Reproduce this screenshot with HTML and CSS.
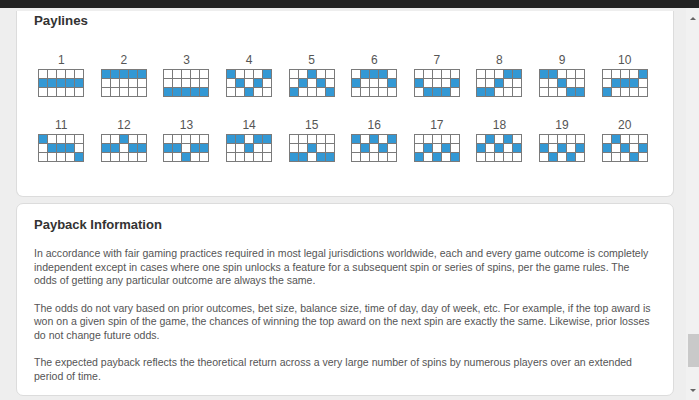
FILE: index.html
```html
<!DOCTYPE html>
<html>
<head>
<meta charset="utf-8">
<link rel="stylesheet" href="styles.css">
</head>
<body>
<div class="topbar"></div>
<div class="viewport">
  <main class="main">
    <section class="card card-paylines">
      <h2 class="card-title">Paylines</h2>
      <div class="paylines">
        <div class="pl"><span class="num">1</span><div class="grid"><i></i><i></i><i></i><i></i><i></i><b></b><b></b><b></b><b></b><b></b><i></i><i></i><i></i><i></i><i></i></div></div>
        <div class="pl"><span class="num">2</span><div class="grid"><b></b><b></b><b></b><b></b><b></b><i></i><i></i><i></i><i></i><i></i><i></i><i></i><i></i><i></i><i></i></div></div>
        <div class="pl"><span class="num">3</span><div class="grid"><i></i><i></i><i></i><i></i><i></i><i></i><i></i><i></i><i></i><i></i><b></b><b></b><b></b><b></b><b></b></div></div>
        <div class="pl"><span class="num">4</span><div class="grid"><b></b><i></i><i></i><i></i><b></b><i></i><b></b><i></i><b></b><i></i><i></i><i></i><b></b><i></i><i></i></div></div>
        <div class="pl"><span class="num">5</span><div class="grid"><i></i><i></i><b></b><i></i><i></i><i></i><b></b><i></i><b></b><i></i><b></b><i></i><i></i><i></i><b></b></div></div>
        <div class="pl"><span class="num">6</span><div class="grid"><i></i><b></b><b></b><b></b><i></i><b></b><i></i><i></i><i></i><b></b><i></i><i></i><i></i><i></i><i></i></div></div>
        <div class="pl"><span class="num">7</span><div class="grid"><i></i><i></i><i></i><i></i><i></i><b></b><i></i><i></i><i></i><b></b><i></i><b></b><b></b><b></b><i></i></div></div>
        <div class="pl"><span class="num">8</span><div class="grid"><i></i><i></i><i></i><b></b><b></b><i></i><i></i><b></b><i></i><i></i><b></b><b></b><i></i><i></i><i></i></div></div>
        <div class="pl"><span class="num">9</span><div class="grid"><b></b><b></b><i></i><i></i><i></i><i></i><i></i><b></b><i></i><i></i><i></i><i></i><i></i><b></b><b></b></div></div>
        <div class="pl"><span class="num">10</span><div class="grid"><i></i><i></i><i></i><i></i><b></b><i></i><b></b><b></b><b></b><i></i><b></b><i></i><i></i><i></i><i></i></div></div>
        <div class="pl"><span class="num">11</span><div class="grid"><b></b><i></i><i></i><i></i><i></i><i></i><b></b><b></b><b></b><i></i><i></i><i></i><i></i><i></i><b></b></div></div>
        <div class="pl"><span class="num">12</span><div class="grid"><i></i><i></i><b></b><i></i><i></i><b></b><b></b><i></i><b></b><b></b><i></i><i></i><i></i><i></i><i></i></div></div>
        <div class="pl"><span class="num">13</span><div class="grid"><i></i><i></i><i></i><i></i><i></i><b></b><b></b><i></i><b></b><b></b><i></i><i></i><b></b><i></i><i></i></div></div>
        <div class="pl"><span class="num">14</span><div class="grid"><b></b><b></b><i></i><b></b><b></b><i></i><i></i><b></b><i></i><i></i><i></i><i></i><i></i><i></i><i></i></div></div>
        <div class="pl"><span class="num">15</span><div class="grid"><i></i><i></i><i></i><i></i><i></i><i></i><i></i><b></b><i></i><i></i><b></b><b></b><i></i><b></b><b></b></div></div>
        <div class="pl"><span class="num">16</span><div class="grid"><b></b><i></i><b></b><i></i><b></b><i></i><b></b><i></i><b></b><i></i><i></i><i></i><i></i><i></i><i></i></div></div>
        <div class="pl"><span class="num">17</span><div class="grid"><i></i><i></i><i></i><i></i><i></i><i></i><b></b><i></i><b></b><i></i><b></b><i></i><b></b><i></i><b></b></div></div>
        <div class="pl"><span class="num">18</span><div class="grid"><i></i><b></b><i></i><b></b><i></i><b></b><i></i><b></b><i></i><b></b><i></i><i></i><i></i><i></i><i></i></div></div>
        <div class="pl"><span class="num">19</span><div class="grid"><i></i><i></i><i></i><i></i><i></i><b></b><i></i><b></b><i></i><b></b><i></i><b></b><i></i><b></b><i></i></div></div>
        <div class="pl"><span class="num">20</span><div class="grid"><i></i><b></b><i></i><i></i><i></i><b></b><i></i><b></b><i></i><b></b><i></i><i></i><i></i><b></b><i></i></div></div>
      </div>
    </section>
    <section class="card card-payback">
      <h2 class="card-title">Payback Information</h2>
      <p class="text">In accordance with fair gaming practices required in most legal jurisdictions worldwide, each and every game outcome is completely independent except in cases where one spin unlocks a feature for a subsequent spin or series of spins, per the game rules. The odds of getting any particular outcome are always the same.</p>
      <p class="text">The odds do not vary based on prior outcomes, bet size, balance size, time of day, day of week, etc. For example, if the top award is won on a given spin of the game, the chances of winning the top award on the next spin are exactly the same. Likewise, prior losses do not change future odds.</p>
      <p class="text">The expected payback reflects the theoretical return across a very large number of spins by numerous players over an extended period of time.</p>
    </section>
  </main>
  <div class="scrollbar">
    <span class="arrow arrow-up"></span>
    <div class="track"><div class="thumb"></div></div>
    <span class="arrow arrow-down"></span>
  </div>
</div>
</body>
</html>
```

FILE: styles.css
```css
html, body {
  margin: 0;
  padding: 0;
  height: 400px;
  overflow: hidden;
}

body {
  background: #eeeeee;
  font-family: "Liberation Sans", Arial, sans-serif;
  color: #555;
}

.topbar {
  height: 8px;
  background: #232323;
}

.viewport {
  display: flex;
  height: 392px;
}

.main {
  flex: 1;
  padding: 3px 12px 0 16px;
  display: flex;
  flex-direction: column;
  gap: 6px;
  overflow: hidden;
}

.card {
  background: #fff;
  border: 1px solid #dcdcdc;
  border-radius: 7px;
}

.card-paylines {
  border-top: none;
  border-top-left-radius: 0;
  border-top-right-radius: 0;
  padding: 2px 17px 34px 17px;
}

.card-title {
  margin: 0;
  font-size: 13.3px;
  line-height: 16px;
  font-weight: bold;
  color: #333;
}

.card-payback .card-title {
  font-size: 13px;
}

.paylines {
  margin: 24px 0 0 -4px;
  display: grid;
  grid-template-columns: repeat(10, 62.6px);
  row-gap: 21px;
}

.pl {
  display: flex;
  flex-direction: column;
  align-items: center;
}

.num {
  font-size: 12px;
  line-height: 14px;
  color: #555;
  margin-bottom: 2px;
}

.grid {
  display: grid;
  grid-template-columns: repeat(5, 8px);
  grid-template-rows: repeat(3, 8px);
  gap: 1px;
  border: 1px solid #7a7a7a;
  background: #7a7a7a;
}

.grid i {
  background: #fff;
}

.grid b {
  background: #3398d4;
}

.card-payback {
  padding: 13px 20px 12px 17px;
}

.text {
  margin: 14px 0 0;
  font-size: 10.55px;
  line-height: 13.5px;
  color: #555;
}

.scrollbar {
  width: 13px;
  background: #f1f1f1;
  display: flex;
  flex-direction: column;
  align-items: center;
}

.arrow {
  width: 0;
  height: 0;
  border-left: 3px solid transparent;
  border-right: 3px solid transparent;
}

.arrow-up {
  margin-top: 9px;
  border-bottom: 3px solid #666;
}

.arrow-down {
  margin-bottom: 8px;
  border-top: 3px solid #666;
}

.track {
  flex: 1;
  width: 100%;
  display: flex;
  flex-direction: column;
  align-items: flex-end;
  padding-top: 314px;
  box-sizing: border-box;
}

.thumb {
  width: 11px;
  height: 33px;
  background: #c9c9c9;
}
```
